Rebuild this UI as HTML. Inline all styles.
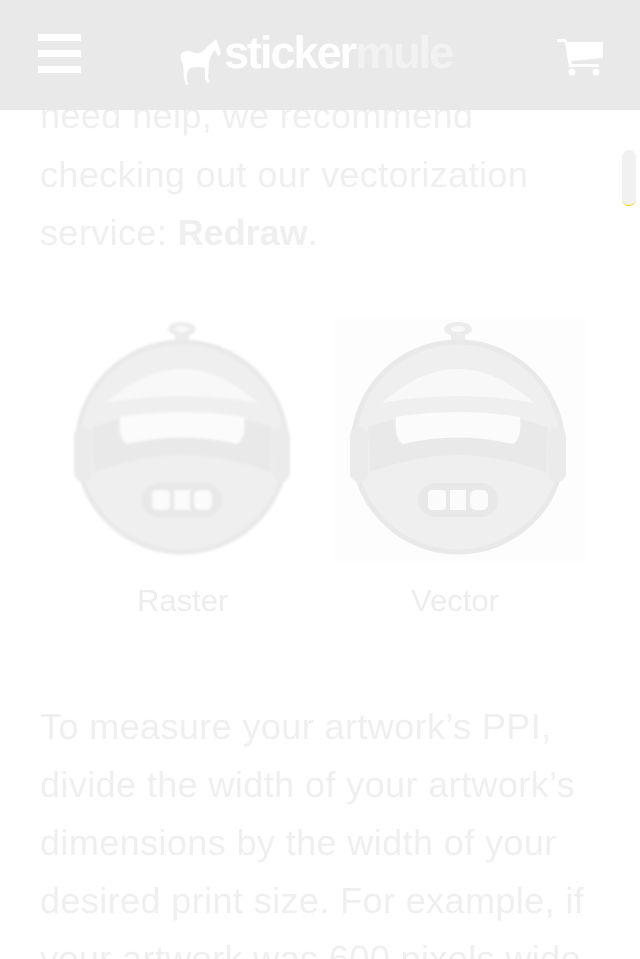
<!DOCTYPE html>
<html><head><meta charset="utf-8"><style>
html,body{margin:0;padding:0;background:#fff;width:640px;height:959px;overflow:hidden;position:relative;font-family:"Liberation Sans",Helvetica,Arial,sans-serif;}
.t{position:absolute;left:40px;font-size:36px;letter-spacing:0.4px;color:#efefef;white-space:nowrap;line-height:1;}
.hdr{position:absolute;left:0;top:0;width:640px;height:110px;background:#e9e9e9;}
.bar{position:absolute;left:38px;width:43px;height:7px;background:#fff;}
.cap{position:absolute;font-size:31px;color:#ededed;}
</style></head><body>
<div class="t" style="top:98px">need help, we recommend</div>
<div class="t" style="top:157px">checking out our vectorization</div>
<div class="t" style="top:215px">service: <b style="letter-spacing:0">Redraw</b>.</div>

<div class="hdr">
 <div class="bar" style="top:34px"></div>
 <div class="bar" style="top:50px"></div>
 <div class="bar" style="top:66px"></div>
 <svg style="position:absolute;left:178px;top:38px" width="46" height="52" viewBox="0 0 46 52"><path d="M3 16 Q6 12 12 13 Q18 17 24 14 Q30 8 36 3 L38 1 L40 6 L43 16 L40 18 L37 12 Q33 16 31 24 L30 40 L32 44 L29 45 L27 40 L27 30 Q20 28 12 30 Q8 34 9 44 L11 46 L8 47 L6 40 L5 26 Q2 22 3 16Z" fill="#fff"/></svg>
 <div style="position:absolute;left:224px;top:30px;font-size:45px;font-weight:bold;letter-spacing:-2px;color:#fff;line-height:1">sticker<span style="color:#f2f2f2">mule</span></div>
 <svg style="position:absolute;left:556px;top:38px" width="48" height="40" viewBox="0 0 48 40"><path d="M1 1 H10 L11 4 H47 V20 L15 23 L16 26 H43 V29 H13 L9 4 H1Z" fill="#fff"/><circle cx="16" cy="34" r="3.5" fill="#fff"/><circle cx="40" cy="34" r="3.5" fill="#fff"/></svg>
</div>

<div style="position:absolute;left:622px;top:150px;width:14px;height:55px;border-radius:7px;background:#f1f1f1;border-bottom:1px solid #f3d000"></div>

<div style="position:absolute;left:335px;top:318px;width:250px;height:244px;background:#fdfdfd"></div>
<svg style="position:absolute;left:0;top:300px" width="640" height="280" viewBox="0 300 640 280">
 <defs>
  <g id="r">
   <rect x="-7" y="-118" width="14" height="32" rx="4" fill="#ececec"/>
   <ellipse cx="0" cy="-118" rx="14" ry="7" fill="#ececec"/>
   <ellipse cx="0" cy="-118" rx="7" ry="3" fill="#f9f9f9"/>
   <circle cx="0" cy="0" r="105" fill="#efefef"/>
   <circle cx="0" cy="0" r="105" fill="none" stroke="#e9e9e9" stroke-width="5"/>
   <rect x="-108" y="-20" width="18" height="55" rx="9" fill="#ebebeb"/>
   <rect x="90" y="-20" width="18" height="55" rx="9" fill="#ebebeb"/>
   <path d="M-76 -44 Q0 -112 76 -44 Q0 -58 -76 -44Z" fill="#f8f8f8"/>
   <path d="M-90 -20 Q0 -50 90 -20 L88 25 Q40 8 0 8 Q-40 8 -88 25Z" fill="#e9e9e9"/>
   <path d="M-62 -30 Q0 -40 62 -30 Q64 -8 55 -3 Q0 -16 -55 -3 Q-64 -8 -62 -30Z" fill="#fbfbfb"/>
   <rect x="-40" y="36" width="80" height="34" rx="17" fill="#e8e8e8"/>
   <rect x="-30" y="43" width="18" height="20" rx="4" fill="#fbfbfb"/>
   <rect x="-8" y="43" width="16" height="20" fill="#fbfbfb"/>
   <rect x="12" y="43" width="18" height="20" rx="6" fill="#fbfbfb"/>
  </g>
 </defs>
 <g transform="translate(182,447)" style="filter:blur(1.2px)"><use href="#r"/></g>
 <g transform="translate(458,447)"><use href="#r"/></g>
</svg>
<div class="cap" style="left:137px;top:583px">Raster</div>
<div class="cap" style="left:411px;top:583px">Vector</div>

<div class="t" style="top:709px">To measure your artwork’s PPI,</div>
<div class="t" style="top:767px">divide the width of your artwork’s</div>
<div class="t" style="top:825px">dimensions by the width of your</div>
<div class="t" style="top:883px">desired print size. For example, if</div>
<div class="t" style="top:941px">your artwork was 600 pixels wide</div>
</body></html>
